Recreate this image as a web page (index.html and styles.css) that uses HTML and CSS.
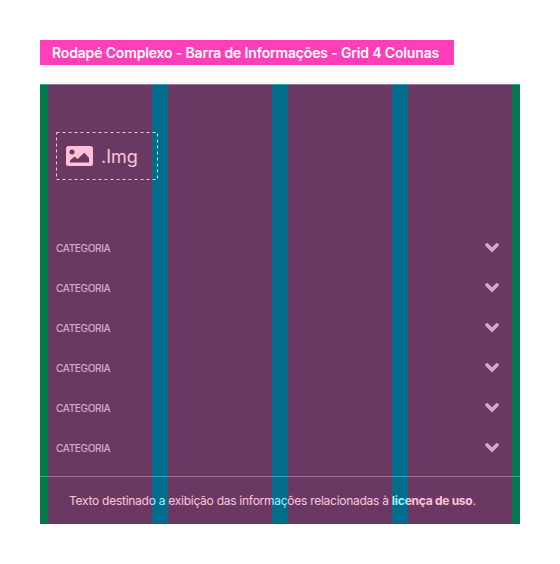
FILE: index.html
```html
<!DOCTYPE html>
<html lang="pt-BR">
<head>
<meta charset="utf-8">
<title>Rodapé Complexo</title>
<link rel="stylesheet" href="styles.css">
</head>
<body>
<svg width="0" height="0" class="defs" aria-hidden="true">
<symbol id="chevron" viewBox="0 0 16 12"><path d="M3 3 L8 7.900 L13 3" fill="none" stroke="currentColor" stroke-width="3.600" stroke-linecap="round"/></symbol>
</svg>
<h1 class="title"><span>Rodapé Complexo - Barra de Informações - Grid 4 Colunas</span></h1>
<footer class="footer">
<div class="logo">
<svg class="logo-frame" viewBox="0 0 102 48"><rect x=".5" y=".5" width="101" height="47" fill="none" stroke="currentColor" stroke-dasharray="3 3"/></svg>
<svg width="27" height="20" viewBox="0 0 27 20"><path fill="currentColor" fill-rule="evenodd" d="M2.5 0h22A2.5 2.5 0 0 1 27 2.500v15a2.500 2.500 0 0 1-2.500 2.500h-22A2.500 2.500 0 0 1 0 17.500v-15A2.500 2.500 0 0 1 2.500 0zM6 3.500a2.500 2.500 0 1 0 0 5a2.500 2.500 0 0 0 0-5zM4 16.500h19v-4.700l-4.700-5.100L11.500 13l-3-2.500L4 14.500z"/></svg>
<span class="logo-text">.Img</span>
</div>
<ul class="categories">
<li><span>CATEGORIA</span><svg><use href="#chevron"/></svg></li>
<li><span>CATEGORIA</span><svg><use href="#chevron"/></svg></li>
<li><span>CATEGORIA</span><svg><use href="#chevron"/></svg></li>
<li><span>CATEGORIA</span><svg><use href="#chevron"/></svg></li>
<li><span>CATEGORIA</span><svg><use href="#chevron"/></svg></li>
<li><span>CATEGORIA</span><svg><use href="#chevron"/></svg></li>
</ul>
<p class="license"><span>Texto destinado a exibição das informações relacionadas à <b>licença de uso</b>.</span></p>
<div class="grid-overlay"><i class="margin"></i><i></i><i class="gutter"></i><i></i><i class="gutter"></i><i></i><i class="gutter"></i><i></i><i class="margin"></i></div>
</footer>
</body>
</html>
```
FILE: styles.css
```css
* { box-sizing: border-box; }
body { margin: 0; padding: 40px; background: #fff; font-family: Inter, sans-serif; }
.defs { display: none; }
.title {
  width: 414px; height: 25px; margin: 0 0 19px; padding-left: 12px;
  background: #ff3fb9; color: #fff;
  font-size: 14px; font-weight: 600; line-height: 25px; letter-spacing: -0.16px; white-space: nowrap;
}
.footer {
  position: relative; width: 480px; height: 440px; padding-top: 47px;
  background: #071d41; color: #fff; border-top: 1px solid #65798c;
}
.logo {
  position: relative;
  display: flex; align-items: center; width: 102px; height: 48px;
  margin: 0 0 0 16px; padding-left: 10px;
}
.logo-frame { position: absolute; inset: 0; width: 102px; height: 48px; }
.logo-text { margin: 1px 0 0 8px; font: 18px/20px Inter, sans-serif; letter-spacing: 0; }
.categories { list-style: none; margin: 48px 0 0; padding: 0 20px 0 16px; color: #c5d4eb; }
.categories li {
  display: flex; align-items: center; justify-content: space-between;
  height: 40px; font-size: 10px; font-weight: 500; letter-spacing: -0.34px;
}
.categories svg { width: 16px; height: 12px; }
.license {
  height: 48px; margin: 8px 0 0; padding-left: 29px;
  border-top: 1px solid #65798c;
  font-size: 12px; line-height: 47px; letter-spacing: -0.265px; white-space: nowrap;
}
.grid-overlay {
  position: absolute; inset: -1px 0 0; display: grid;
  grid-template-columns: 8px 104px 16px 104px 16px 104px 16px 104px 8px;
}
.grid-overlay i { background: rgba(255, 99, 150, 0.4); }
.grid-overlay .gutter { background: rgba(0, 227, 250, 0.4); }
.grid-overlay .margin { background: rgba(0, 255, 90, 0.4); }
```
